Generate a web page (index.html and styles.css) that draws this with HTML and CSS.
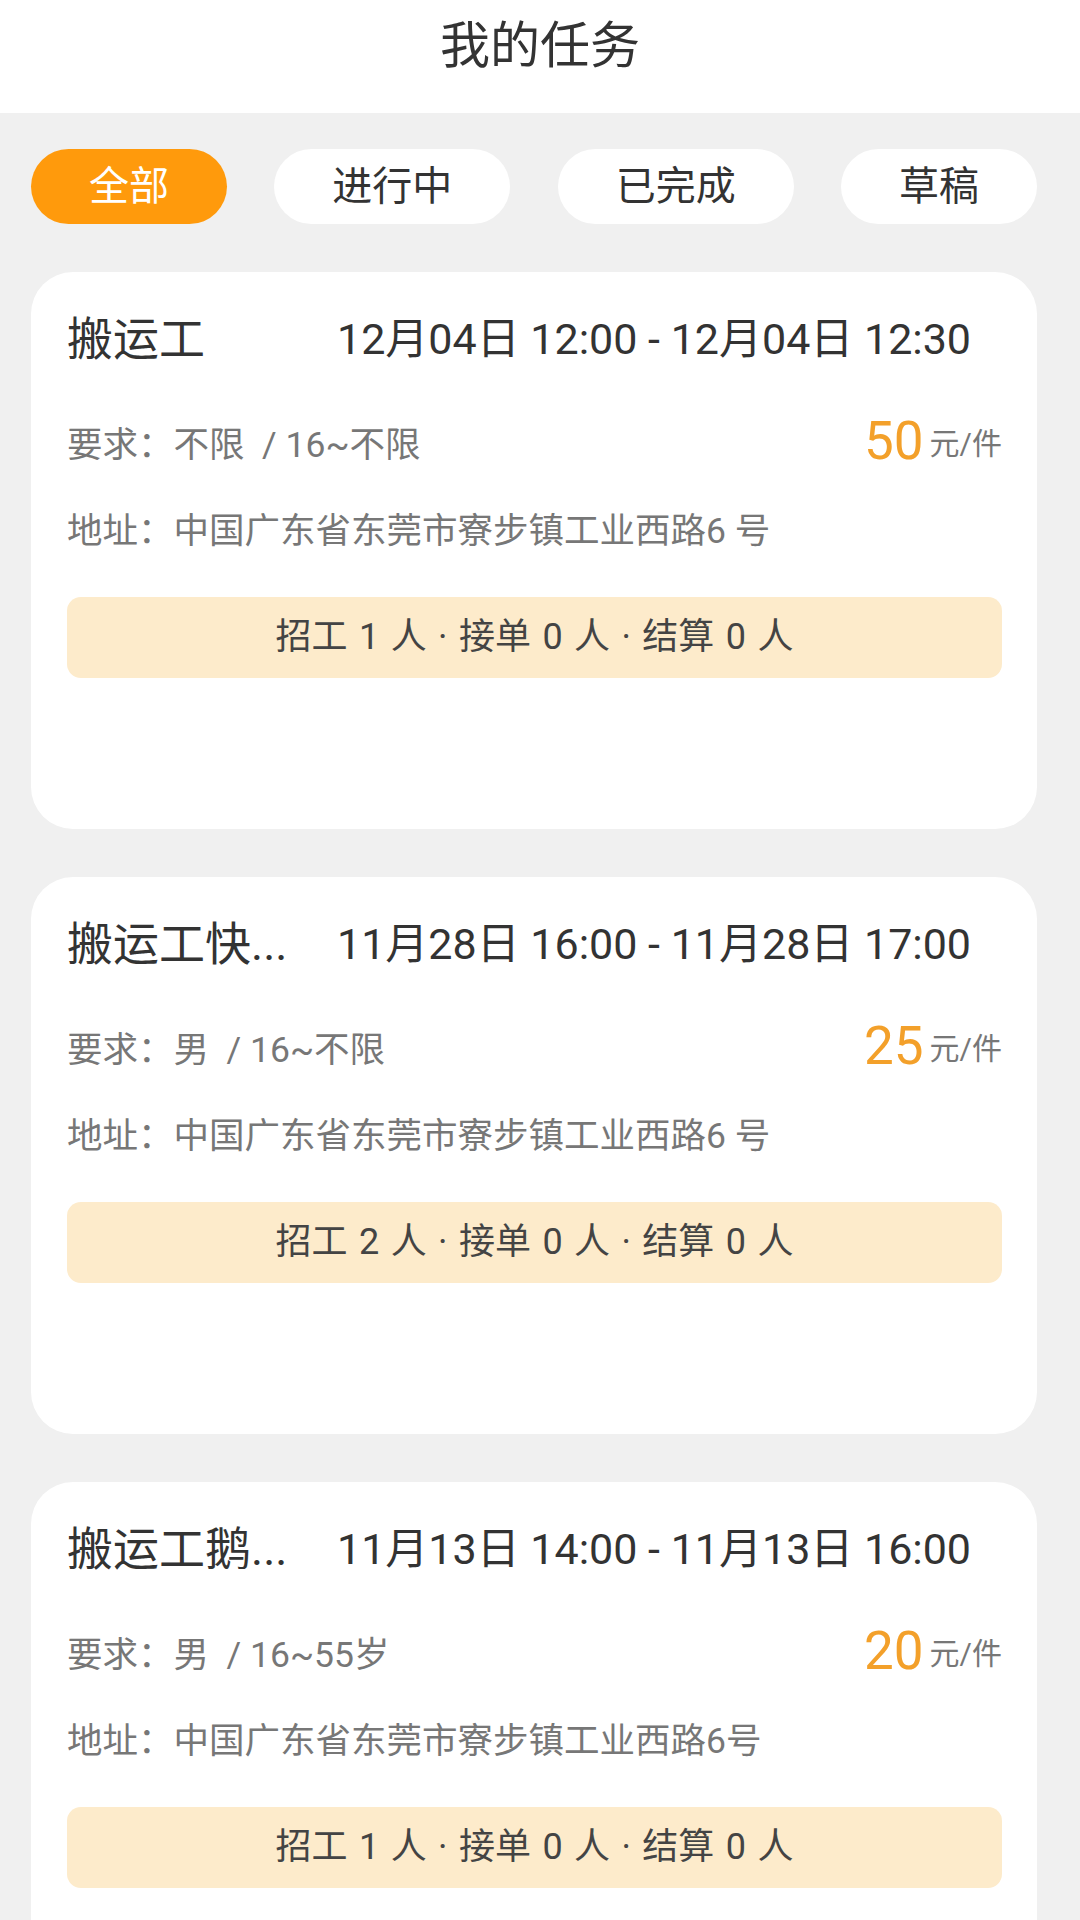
FILE: index.html
```html
<!DOCTYPE html>
<html lang="zh-CN">
<head>
<meta charset="utf-8" />
<title>我的任务</title>
<link rel="stylesheet" href="styles.css">
</head>
<body>
<div class="header">我的任务</div>
<div class="main">
    <div class="tabs">
        <span class="tab active">全部</span>
        <span class="tab">进行中</span>
        <span class="tab">已完成</span>
        <span class="tab">草稿</span>
    </div>

    <div class="card">
        <div class="card-top">
            <span class="name">搬运工</span>
            <span class="time">12月04日 12:00 - 12月04日 12:30</span>
        </div>
        <div class="card-row">
            <span class="need">要求：不限&nbsp; / 16~不限</span>
            <span class="price"><b>50</b><i>元/件</i></span>
        </div>
        <div class="addr">地址：中国广东省东莞市寮步镇工业西路6 号</div>
        <div class="count">招工 1 人 · 接单 0 人 · 结算 0 人</div>
    </div>

    <div class="card">
        <div class="card-top">
            <span class="name">搬运工快...</span>
            <span class="time">11月28日 16:00 - 11月28日 17:00</span>
        </div>
        <div class="card-row">
            <span class="need">要求：男&nbsp; / 16~不限</span>
            <span class="price"><b>25</b><i>元/件</i></span>
        </div>
        <div class="addr">地址：中国广东省东莞市寮步镇工业西路6 号</div>
        <div class="count">招工 2 人 · 接单 0 人 · 结算 0 人</div>
    </div>

    <div class="card">
        <div class="card-top">
            <span class="name">搬运工鹅...</span>
            <span class="time">11月13日 14:00 - 11月13日 16:00</span>
        </div>
        <div class="card-row">
            <span class="need">要求：男&nbsp; / 16~55岁</span>
            <span class="price"><b>20</b><i>元/件</i></span>
        </div>
        <div class="addr">地址：中国广东省东莞市寮步镇工业西路6号</div>
        <div class="count">招工 1 人 · 接单 0 人 · 结算 0 人</div>
    </div>
</div>
</body>
</html>
```

FILE: styles.css
```css
*{ margin:0; padding:0; box-sizing:border-box;}
body{ width:1080px; background:#f0f0f0; font-family:Roboto, "Noto Sans CJK SC", sans-serif; color:#333;}

.header{ height:113px; line-height:92px; background:#fff; text-align:center; font-size:50px; color:#333;}

.main{ padding:36px 43px 0 31px;}

.tabs{ display:flex; justify-content:space-between;}
.tab{ height:75px; line-height:75px; padding:0 58px; border-radius:38px; background:#fff; font-size:40px; color:#333;}
.tab.active{ background:#ff9a0c; color:#fff;}

.card{ margin-top:48px; padding:32px 35px 151px 36px; background:#fff; border-radius:42px;}

.card-top{ display:flex; align-items:center; height:62px;}
.name{ width:240px; margin-right:30px; font-size:46px; white-space:nowrap; overflow:hidden; color:#333;}
.time{ font-size:43px; white-space:nowrap; color:#333;}

.card-row{ display:flex; justify-content:space-between; align-items:center; height:60px; margin-top:45px;}
.need{ font-size:35.5px; color:#777;}
.price{ display:flex; align-items:center;}
.price b{ font-weight:400; font-size:53px; color:#f3a02a;}
.price i{ font-style:normal; font-size:30px; margin-left:6px; color:#777;}

.addr{ height:60px; line-height:60px; margin-top:30px; font-size:35.5px; color:#777;}

.count{ height:81px; line-height:81px; margin-top:36px; border-radius:14px; background:#fdebcb; text-align:center; font-size:36px; word-spacing:2.5px; color:#444;}
```
